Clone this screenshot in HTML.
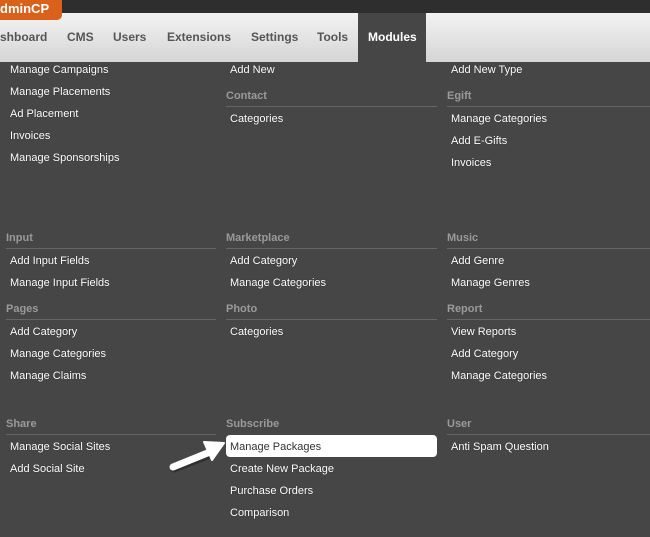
<!DOCTYPE html>
<html><head><style>
body{margin:0;width:650px;height:537px;background:#464646;overflow:hidden;position:relative;font-family:"Liberation Sans",sans-serif;}
.top{position:absolute;left:0;top:0;width:650px;height:13px;background:#2e2e2e;}
.logo{position:absolute;left:0;top:0;width:62px;height:20px;background:#d9611a;border-radius:0 0 5px 0;color:#fff;font:bold 13px "Liberation Sans",sans-serif;line-height:18px;z-index:3}
.nav{position:absolute;left:0;top:13px;width:650px;height:49px;background:linear-gradient(#f3f3f3,#d5d5d5);}
.nav span{position:absolute;top:17px;font:bold 12px "Liberation Sans",sans-serif;color:#555;}
.mod{position:absolute;left:358px;top:13px;width:68px;height:49px;background:#464646}
.i,.h{position:absolute;font-size:11px;line-height:14px;white-space:nowrap;margin-top:1px}
.i{color:#fff;text-shadow:0 0 1px #222}
.h{color:#9a9a9a;font-weight:bold}
.l{position:absolute;height:1px;background:#666}
.hl{position:absolute;left:226px;top:435px;width:211px;height:22px;background:#fff;border-radius:4px}
</style></head><body>
<div class="top"></div>
<div class="logo">dminCP</div>
<div class="nav">
<span style="left:0">shboard</span><span style="left:67px">CMS</span><span style="left:113px">Users</span><span style="left:167px">Extensions</span><span style="left:251px">Settings</span><span style="left:317px">Tools</span>
</div>
<div class="mod"><span style="position:absolute;left:10px;top:17px;font:bold 12px 'Liberation Sans',sans-serif;color:#fff;">Modules</span></div>

<div class="i" style="left:10px;top:62px">Manage Campaigns</div>
<div class="i" style="left:10px;top:84px">Manage Placements</div>
<div class="i" style="left:10px;top:106px">Ad Placement</div>
<div class="i" style="left:10px;top:128px">Invoices</div>
<div class="i" style="left:10px;top:150px">Manage Sponsorships</div>

<div class="i" style="left:230px;top:62px">Add New</div>
<div class="h" style="left:226px;top:88px">Contact</div><div class="l" style="left:226px;top:106px;width:211px"></div>
<div class="i" style="left:230px;top:111px">Categories</div>

<div class="i" style="left:451px;top:62px">Add New Type</div>
<div class="h" style="left:447px;top:88px">Egift</div><div class="l" style="left:447px;top:106px;width:203px"></div>
<div class="i" style="left:451px;top:111px">Manage Categories</div>
<div class="i" style="left:451px;top:133px">Add E-Gifts</div>
<div class="i" style="left:451px;top:155px">Invoices</div>

<div class="h" style="left:6px;top:230px">Input</div><div class="l" style="left:6px;top:248px;width:210px"></div>
<div class="i" style="left:10px;top:253px">Add Input Fields</div>
<div class="i" style="left:10px;top:275px">Manage Input Fields</div>
<div class="h" style="left:226px;top:230px">Marketplace</div><div class="l" style="left:226px;top:248px;width:211px"></div>
<div class="i" style="left:230px;top:253px">Add Category</div>
<div class="i" style="left:230px;top:275px">Manage Categories</div>
<div class="h" style="left:447px;top:230px">Music</div><div class="l" style="left:447px;top:248px;width:203px"></div>
<div class="i" style="left:451px;top:253px">Add Genre</div>
<div class="i" style="left:451px;top:275px">Manage Genres</div>

<div class="h" style="left:6px;top:301px">Pages</div><div class="l" style="left:6px;top:319px;width:210px"></div>
<div class="i" style="left:10px;top:324px">Add Category</div>
<div class="i" style="left:10px;top:346px">Manage Categories</div>
<div class="i" style="left:10px;top:368px">Manage Claims</div>
<div class="h" style="left:226px;top:301px">Photo</div><div class="l" style="left:226px;top:319px;width:211px"></div>
<div class="i" style="left:230px;top:324px">Categories</div>
<div class="h" style="left:447px;top:301px">Report</div><div class="l" style="left:447px;top:319px;width:203px"></div>
<div class="i" style="left:451px;top:324px">View Reports</div>
<div class="i" style="left:451px;top:346px">Add Category</div>
<div class="i" style="left:451px;top:368px">Manage Categories</div>

<div class="h" style="left:6px;top:416px">Share</div><div class="l" style="left:6px;top:434px;width:210px"></div>
<div class="i" style="left:10px;top:439px">Manage Social Sites</div>
<div class="i" style="left:10px;top:461px">Add Social Site</div>
<div class="h" style="left:226px;top:416px">Subscribe</div>
<div class="hl"></div>
<div class="i" style="left:230px;top:439px;color:#333;text-shadow:none">Manage Packages</div>
<div class="i" style="left:230px;top:461px">Create New Package</div>
<div class="i" style="left:230px;top:483px">Purchase Orders</div>
<div class="i" style="left:230px;top:505px">Comparison</div>
<div class="h" style="left:447px;top:416px">User</div><div class="l" style="left:447px;top:434px;width:203px"></div>
<div class="i" style="left:451px;top:439px">Anti Spam Question</div>

<svg style="position:absolute;left:160px;top:430px" width="70" height="50">
<path d="M13 37 L52 22" stroke="#000" stroke-opacity=".3" stroke-width="7" stroke-linecap="round" transform="translate(1,2)"/>
<path d="M13 37 L50 22" stroke="#fff" stroke-width="7" stroke-linecap="round"/>
<path d="M44 12 L64 13 L52 30 Z" fill="#fff" stroke="#fff" stroke-width="2" stroke-linejoin="round"/>
</svg>
</body></html>
